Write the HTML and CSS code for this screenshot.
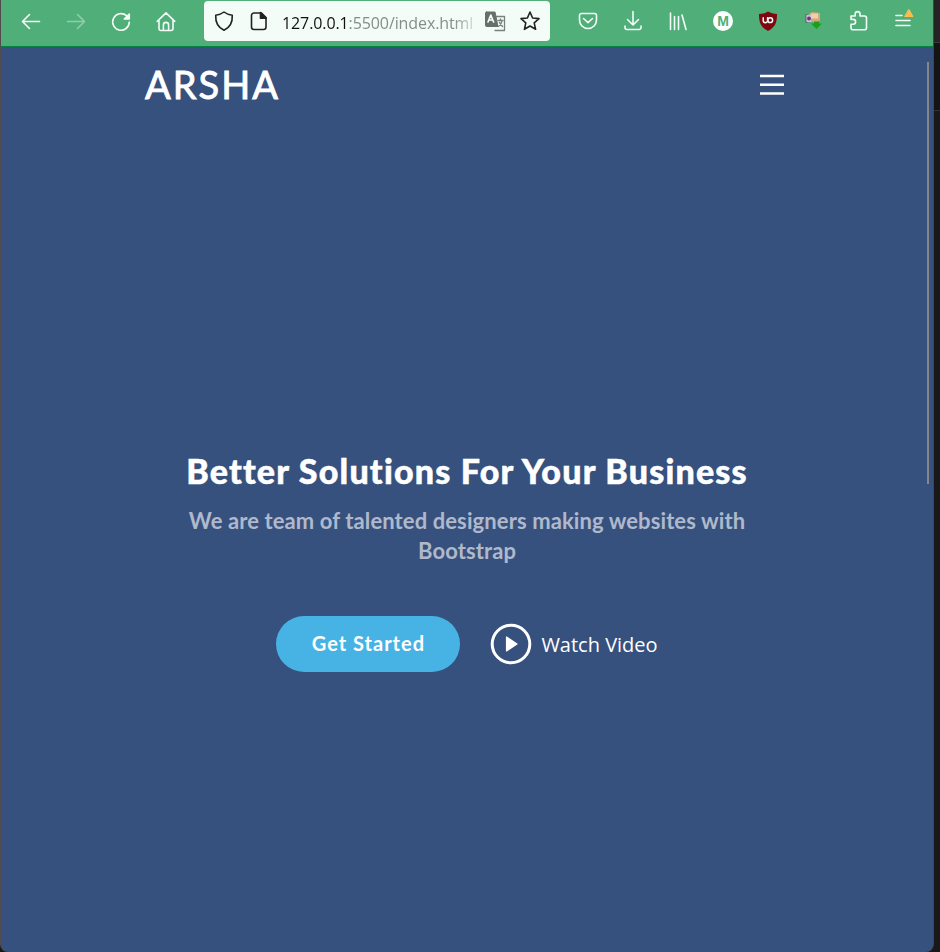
FILE: index.html
```html
<!DOCTYPE html>
<html lang="en">
<head>
<meta charset="utf-8">
<title>Arsha</title>
<link rel="stylesheet" href="styles.css">
</head>
<body>
<div class="window">
  <div class="toolbar">
    <nav class="tools">
      <svg class="icon" viewBox="0 0 24 24"><path d="M20.500 12.500h-17M10.500 5.500l-7 7 7 7"/></svg>
      <svg class="icon faded" viewBox="0 0 24 24"><path d="M3.500 12.500h17M13.500 5.500l7 7-7 7"/></svg>
      <svg class="icon" viewBox="0 0 24 24"><path d="M17.500 6.700A8.300 8.300 0 1 0 20.300 13"/><path class="solid" d="M20.300 5v5h-5z"/></svg>
      <svg class="icon" viewBox="0 0 24 24"><path d="M3.200 12.300L12 3.800l8.800 8.500M5 10.800v8.700a2 2 0 0 0 2 2h10a2 2 0 0 0 2-2v-8.700M9.400 21v-5a2.600 2.600 0 0 1 5.200 0v5"/></svg>
    </nav>
    <div class="address">
      <svg class="icon dark" viewBox="0 0 24 24"><path d="M12 3c2.500 2 5 2.800 8.300 3.200C20.600 13 18 18.500 12 21.200 6 18.500 3.400 13 3.700 6.200 7 5.800 9.500 5 12 3z"/></svg>
      <svg class="icon dark page" viewBox="0 0 24 24"><path d="M7 4h7.500L19 8.500V18a2.500 2.500 0 0 1-2.500 2.500H7A2.500 2.500 0 0 1 4.500 18V6.500A2.500 2.500 0 0 1 7 4z"/><path class="ink" d="M13.500 3.500v5.800h5.800z"/></svg>
      <span class="url"><b>127.0.0.1</b>:5500/index.html</span>
      <svg class="icon translate" viewBox="0 0 24 24"><path class="back" d="M13 7.500h8.500v14H12"/><path class="card" d="M3.500 3h8.500l3 14.500h-11.500a1 1 0 0 1-1-1v-12.500a1 1 0 0 1 1-1z"/><path class="letter" d="M5 13L7.800 6l2.800 7M6 11h3.600"/><path class="back" d="M15 11.500h5M17.500 10v1.500M19 12c-.5 3-2 4.500-3.500 5.500M16.500 13.500l3 4"/></svg>
      <svg class="icon dark star" viewBox="0 0 24 24"><path d="M12 3l2.600 6 6.400.6-4.800 4.300 1.400 6.400L12 17l-5.600 3.300 1.400-6.400L3 9.600 9.400 9z"/></svg>
    </div>
    <nav class="tools">
      <svg class="icon" viewBox="0 0 24 24"><path d="M5.500 4.500h13a2 2 0 0 1 2 2V11a8.500 8.500 0 0 1-17 0V6.500a2 2 0 0 1 2-2zM7.500 9.500l4.500 4.200 4.500-4.200"/></svg>
      <svg class="icon" viewBox="0 0 24 24"><path d="M12 2.500v13M6.500 10.500l5.500 5.500 5.500-5.500M4 17v1.500a2 2 0 0 0 2 2h12a2 2 0 0 0 2-2V17"/></svg>
      <svg class="icon" viewBox="0 0 24 24"><path d="M4.500 4v16.500M8.500 7.500v13M12.500 7.500v13M16 6L20 20.500" /></svg>
      <svg class="icon" viewBox="0 0 24 24"><circle class="disc" cx="12" cy="12" r="10"/><text class="mail" x="12" y="17" text-anchor="middle">M</text></svg>
      <svg class="icon" viewBox="0 0 24 24"><path class="shield" d="M12 2.500c2.800 1.800 5.500 2.300 9 2.500 0 8.500-1.500 13-9 17-7.500-4-9-8.500-9-17 3.500-.2 6.200-.7 9-2.500z"/><path class="mark" d="M7.200 8.800v2.700a2.200 2.200 0 0 0 4.400 0V8.800"/><circle class="mark" cx="14.200" cy="11.200" r="2.400"/></svg>
      <svg class="icon grab" viewBox="0 0 24 24"><path fill="#d4a77c" d="M8 5l3-2 8 1v8l-4 1.500-7-1z"/><path fill="#f0cfaa" d="M10 4.500h7v5h-7z"/><path fill="#77717c" d="M4 5h3v9H4z"/><path fill="#d3bdd8" d="M5.500 6H10v7H5.500z"/><circle cx="8" cy="9.500" r="1.900" fill="#6d3181"/><path fill="#209b20" d="M13 12.500h5v2h3L15.500 20 10 14.500h3z"/></svg>
      <svg class="icon" viewBox="0 0 24 24"><path d="M9.200 7V5a2.400 2.400 0 0 1 4.800 0v2h4.500a2 2 0 0 1 2 2v9.700a2 2 0 0 1-2 2H7a2 2 0 0 1-2-2v-3.500h2.200a2.400 2.400 0 0 0 0-4.800H5V7z"/></svg>
      <svg class="icon" viewBox="0 0 24 24"><path d="M5 6.500h6M5 11.500h14M5 16.500h14"/><path class="alert" d="M18 .5l4 7h-8z"/></svg>
    </nav>
  </div>
  <div class="page-view">
    <header class="header">
      <a class="logo">ARSHA</a>
      <svg class="menu" viewBox="0 0 24 22"><path d="M0 2h24M0 10.700h24M0 19.500h24"/></svg>
    </header>
    <main class="hero">
      <h1>Better Solutions For Your Business</h1>
      <h2>We are team of talented designers making websites with<br>Bootstrap</h2>
      <div class="actions">
        <a class="start">Get Started</a>
        <a class="watch"><svg viewBox="0 0 42 42"><circle cx="21" cy="21" r="18.800"/><path d="M16.500 14v14l10.500-7z" stroke="#fff" stroke-width="1.200" stroke-linejoin="round"/></svg><span>Watch Video</span></a>
      </div>
    </main>
    <div class="scroll"></div>
  </div>
</div>
<aside class="desktop"></aside>
</body>
</html>
```
FILE: styles.css
```css
* { box-sizing: border-box; }
body { margin: 0; height: 952px; display: flex; background: #181818; overflow: hidden; font-family: "Open Sans", sans-serif; }
.window { width: 934px; height: 952px; border-left: 1px solid #514b4f; border-right: 1px solid #414551; border-radius: 0 0 8px 8px; overflow: hidden; background: #37517e; }
.desktop { width: 6px; height: 111px; background: linear-gradient(#242424 0 42px, #3a3a3a 42px 43px, #141414 43px 110px, #333 110px); }
.toolbar { height: 47px; display: flex; align-items: flex-start; padding-left: 7.5px; background: #50ae79; border-bottom: 1px solid #058242; }
.tools { display: flex; padding-top: 9px; }
.icon { width: 24px; height: 24px; margin: 0 10.500px; flex: none; fill: none; stroke: #f4fcf8; stroke-width: 1.600; stroke-linecap: round; stroke-linejoin: round; overflow: visible; }
.faded { opacity: .4; }
.solid { fill: #f4fcf8; }
.address { width: 346px; height: 40px; margin: 1px 15.500px 0; padding: 0 8px; display: flex; align-items: center; border-radius: 4px; background: #f3fcf7; }
.address .icon { margin: 0; }
.address .dark { stroke: #222; }
.address .page { margin-left: 11px; }
.ink { fill: #222; }
.url { width: 194px; margin: 3px 8px 0 11px; overflow: hidden; white-space: nowrap; font: 16px/24px "Open Sans", sans-serif; letter-spacing: -.1px; color: #858e89; -webkit-mask-image: linear-gradient(90deg, #000 89%, transparent 103%); mask-image: linear-gradient(90deg, #000 89%, transparent 103%); }
.url b { font-weight: 400; color: #111; }
.address .star { margin-left: 11px; }
.card { fill: #65706b; stroke: #65706b; stroke-width: 1; }
.letter { stroke: #fff; }
.back { stroke: #77827c; stroke-width: 1.300; }
.disc { fill: #fff; stroke: none; }
.mail { fill: #50ae79; stroke: none; font: 700 14px "Liberation Sans", sans-serif; }
.shield { fill: #800610; stroke: none; }
.mark { stroke-width: 1.500; }
.grab { stroke: none; }
.alert { fill: #ffbd4f; stroke: #ffbd4f; stroke-width: 1; }
.page-view { position: relative; height: 905px; }
.header { height: 76px; padding: 0 149px 0 144px; display: flex; align-items: center; justify-content: space-between; }
.logo { padding-bottom: 2px; color: #fff; font: 400 38px/46px Lato, sans-serif; letter-spacing: 2px; -webkit-text-stroke: .9px #fff; }
.menu { width: 24px; height: 22px; stroke: #fff; stroke-width: 2.400; }
.hero { padding-top: 326px; text-align: center; white-space: nowrap; }
h1 { margin: 0; color: #fff; font: 900 34px/44px Lato, sans-serif; letter-spacing: 1.200px; -webkit-text-stroke: .5px #fff; }
h2 { margin: 13px 0 0; color: #afb9cb; font: 700 22px/30px Lato, sans-serif; letter-spacing: .1px; }
.actions { display: flex; align-items: center; justify-content: center; gap: 30px; margin-top: 50px; }
.start { width: 184px; height: 56px; border-radius: 28px; background: #47b2e4; color: #fff; font: 700 20px/54px Lato, sans-serif; letter-spacing: 1px; }
.watch { display: flex; align-items: center; gap: 9px; color: #fff; font: 20px/28px "Open Sans", sans-serif; }
.watch svg { width: 42px; height: 42px; fill: #fff; }
.watch span { padding-top: 2px; }
.watch circle { fill: none; stroke: #fff; stroke-width: 3; }
.scroll { position: absolute; top: 15px; right: 4px; width: 2px; height: 422px; background: #85868a; }
```
